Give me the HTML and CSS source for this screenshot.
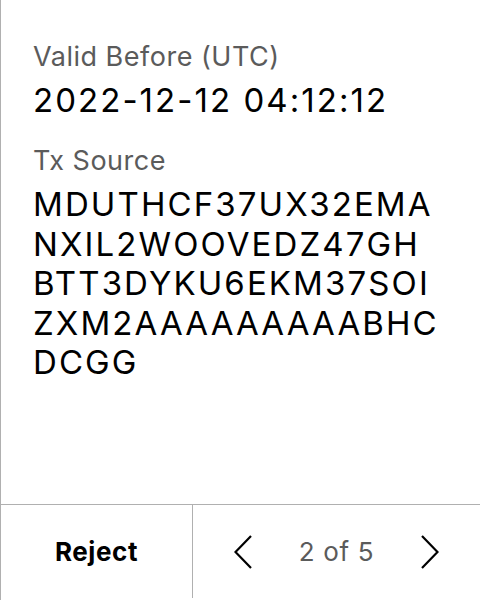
FILE: index.html
```html
<!DOCTYPE html>
<html>
<head>
<meta charset="utf-8">
<link rel="stylesheet" href="styles.css">
</head>
<body>
<div class="screen">
  <div class="content">
    <div class="field">
      <div class="label">Valid Before (UTC)</div>
      <div class="value">2022-12-12 04:12:12</div>
    </div>
    <div class="field">
      <div class="label">Tx Source</div>
      <div class="value source">MDUTHCF37UX32EMA<wbr>NXIL2WOOVEDZ47GH<wbr>BTT3DYKU6EKM37SOI<wbr>ZXM2AAAAAAAAABHC<wbr>DCGG</div>
    </div>
  </div>
  <div class="footer">
    <div class="reject">Reject</div>
    <div class="pager">
      <svg class="chev" width="18" height="34" viewBox="0 0 18 34"><path d="M17 1 L1.5 17 L17 33" fill="none" stroke="#000" stroke-width="2.2"/></svg>
      <span class="count">2 of 5</span>
      <svg class="chev" width="18" height="34" viewBox="0 0 18 34"><path d="M1 1 L16.5 17 L1 33" fill="none" stroke="#000" stroke-width="2.2"/></svg>
    </div>
  </div>
</div>
</body>
</html>
```

FILE: styles.css
```css
html, body {
  margin: 0;
  padding: 0;
  background: #fff;
}
body {
  font-family: Inter, "Noto Sans", sans-serif;
  color: #000;
}
.screen {
  width: 480px;
  height: 600px;
  box-sizing: border-box;
  border-left: 1px solid #b0b0b0;
  display: flex;
  flex-direction: column;
}
.content {
  flex: 1;
  padding: 40px 34px 0 32px;
}
.field {
  margin-bottom: 24px;
}
.label {
  font-size: 27px;
  line-height: 34px;
  letter-spacing: 0.5px;
  color: #5b5b5b;
}
.value {
  margin-top: 6px;
  font-size: 33px;
  line-height: 40px;
  letter-spacing: 2.05px;
}
.source {
  word-break: normal;
  line-height: 39.5px;
  letter-spacing: 2.1px;
  margin-top: 7px;
}
.footer {
  height: 96px;
  box-sizing: border-box;
  padding-bottom: 2px;
  border-top: 1px solid #b0b0b0;
  display: flex;
}
.reject {
  width: 191px;
  border-right: 1px solid #b0b0b0;
  display: flex;
  align-items: center;
  justify-content: center;
  font-size: 26px;
  font-weight: 700;
  letter-spacing: 0.6px;
}
.pager {
  flex: 1;
  display: flex;
  align-items: center;
  justify-content: space-between;
  padding: 0 41px 0 41px;
}
.count {
  font-size: 26px;
  letter-spacing: 0.7px;
  color: #5b5b5b;
}
.chev {
  display: block;
}
```
